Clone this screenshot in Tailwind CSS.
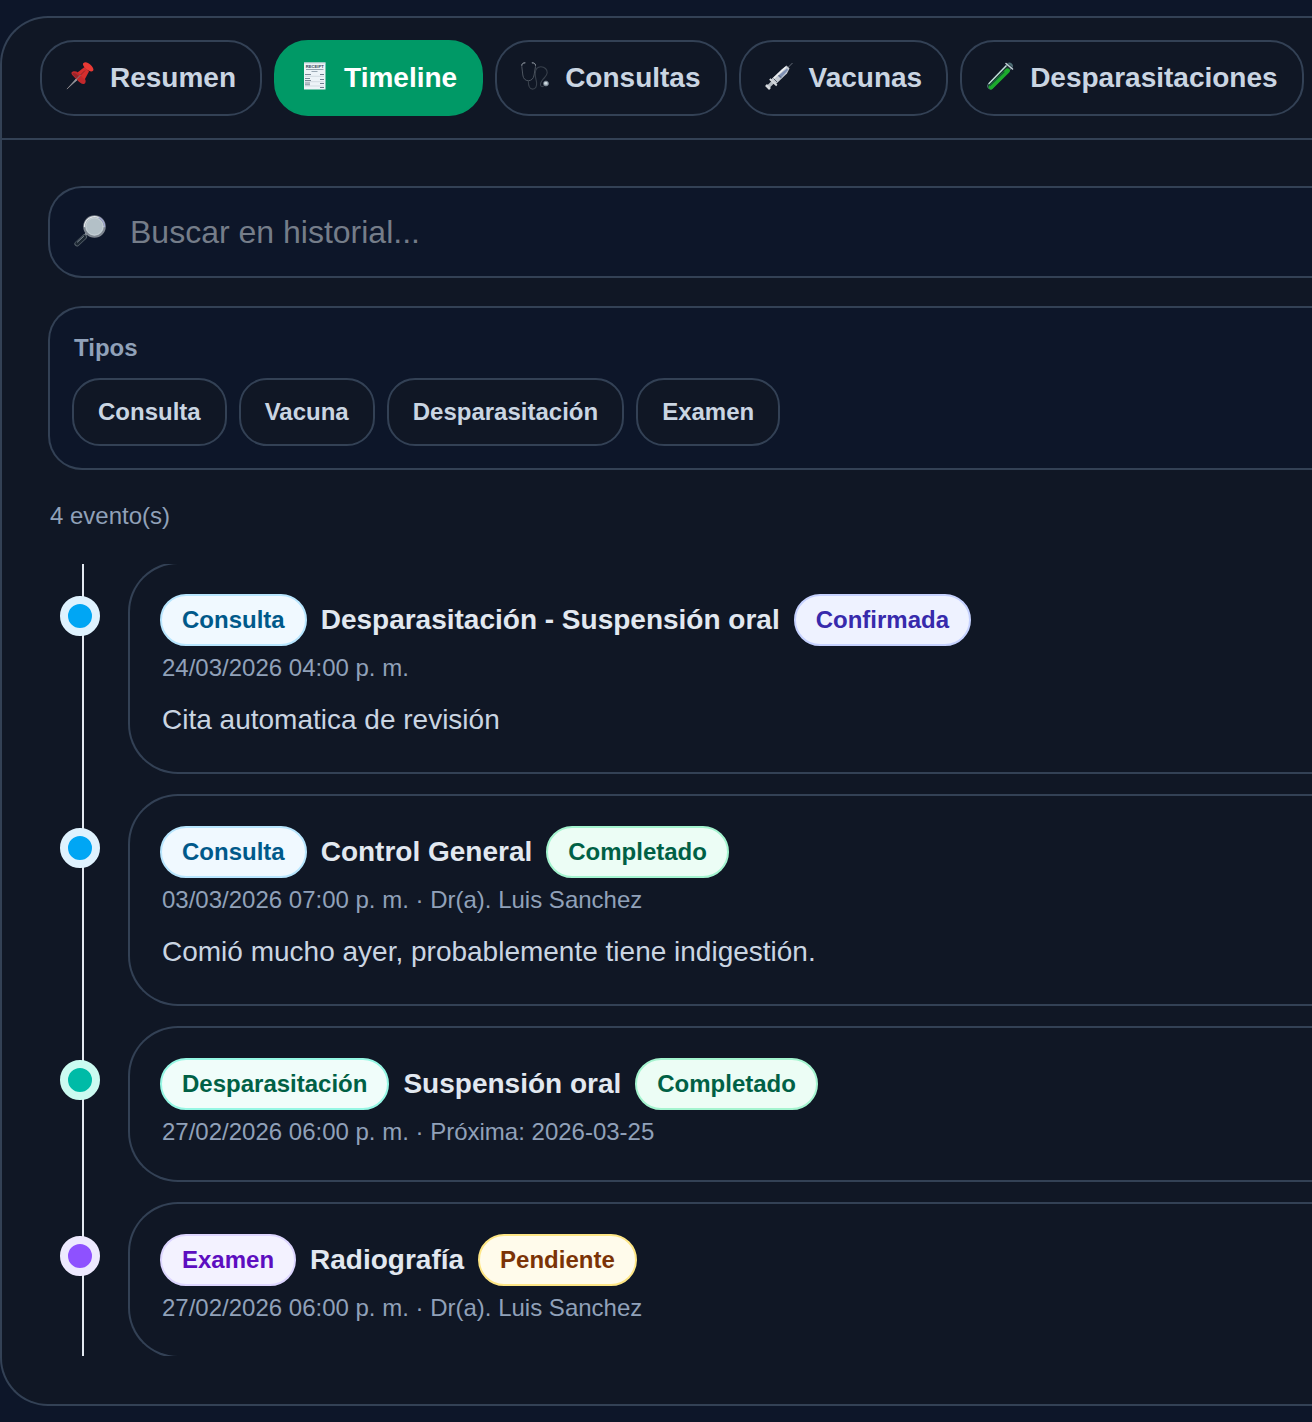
<!DOCTYPE html>
<html lang="es">
<head>
<meta charset="utf-8">
<meta name="viewport" content="width=device-width, initial-scale=1">
<title>Historial</title>
<script src="https://cdn.jsdelivr.net/npm/@tailwindcss/browser@4"></script>
</head>
<body class="min-h-screen overflow-x-hidden bg-[#0d1629] py-4 font-['Liberation_Sans',Arial,sans-serif]">
<main class="rounded-l-[48px] border-y-2 border-l-2 border-[#334155] bg-[#101725]">

  <nav class="flex gap-3 overflow-hidden border-b-2 border-[#334155] py-[22px] pl-[38px] text-[28px] leading-10 font-bold text-slate-300" aria-label="Secciones">
    <button type="button" class="flex h-[76px] shrink-0 items-center gap-4 rounded-[34px] border-2 border-[#334155] px-6">
      <svg class="mb-1 size-7" viewBox="0 0 28 28" aria-hidden="true">
        <path d="M.3 27.700 11 15.500l1.500 1.500Z" fill="#a9b0b8"/>
        <path d="M5.500 10.500c1.500-1.700 4.500-1.500 6.500 0l7 6.500c1.200 2 .8 4.200-1 5-2 .5-4.500-1.300-7-4.200s-6.200-5.200-5.500-7.300Z" fill="#c3282c"/>
        <path d="m11.500 10.500 7-5.500 4.500 4.500-4.300 8Z" fill="#d62e2d"/>
        <path d="M17.500.9c1.800-1.500 4.700-.4 7 1.800s3.700 4.800 2.500 6.100-4.300.5-6.800-1.800-4.200-4.700-2.700-6.100Z" fill="#e93a35"/>
        <path d="M6.500 11c2.500-.5 4.500 1 6.500 3l-2 2.500c-2.200-2-4-3.600-4.500-5.500Z" fill="#96262b"/>
        <path d="m12 15.500 7-7" stroke="#8e2429" stroke-width="1"/>
        <path d="M1 27 14.500 13" stroke="#8b8388" stroke-width=".9"/>
      </svg>
      Resumen
    </button>
    <button type="button" aria-current="page" class="flex h-[76px] shrink-0 items-center gap-4 rounded-[34px] border-2 border-[#009966] bg-[#009966] px-6 text-white">
      <svg class="mb-1 size-7" viewBox="0 0 28 28" aria-hidden="true">
        <path d="M4 .5h21.500v27H4Z" fill="#edf3f8"/>
        <path d="M4 .5h21.500v1H4Z" fill="#c3ced8"/>
        <text x="14.750" y="6" text-anchor="middle" font-size="4.200" font-weight="700" fill="#33475a">RECEIPT</text>
        <path d="M6 7.500h17.500" stroke="#7b8b9b" stroke-width=".8"/>
        <path d="M11.500 9.500h6" stroke="#9aa8b4" stroke-width="1"/>
        <path d="M5 12.500h6M5 16.500h5M5 18.500h6M5 21h5M5 22.800h5" stroke="#7a8997" stroke-width="1"/>
        <path d="M20 12.500h4M20 17.500h4M20 21.500h4M20 25.500h4" stroke="#6a7c8d" stroke-width="1.200"/>
        <path d="M5 14.300h19M5 19.700h19M5 24h19" stroke="#c6d0d9" stroke-width=".7"/>
      </svg>
      Timeline
    </button>
    <button type="button" class="flex h-[76px] shrink-0 items-center gap-4 rounded-[34px] border-2 border-[#334155] px-6">
      <svg class="mb-1 size-7" viewBox="0 0 28 28" fill="none" stroke-linecap="round" aria-hidden="true">
        <path d="M3.800.8C1.500.8.5 2.200.8 4.500l1 8.500c.4 3.500 2.500 5.700 5.500 5.700s5.300-2 5.800-5.700l1.400-8.500c.3-2.400-.8-3.700-3.200-3.700" stroke="#4d5560" stroke-width="1"/>
        <path d="M4 .8C2 .8.900 1.700.8 3.200M11.200.8c2 0 3.200.8 3.300 2.300" stroke="#8a919a" stroke-width="1"/>
        <path d="M7.300 18.800c0 5.500 1.500 8.300 4.200 8.300 3.400 0 4.300-2.700 4.100-6.200-.2-3-1.600-5.500-1.400-9.400.2-4.200 2.500-6.700 5.700-6.700 3.600 0 6.500 2.500 6.300 6-.2 3.200-3 4.800-4.800 7.200-1.700 2.300-2.500 4.500-1.400 6 .8 1 2.500.6 3.500-.5" stroke="#38404c" stroke-width="1.100"/>
        <circle cx="25" cy="21.500" r="2.500" fill="#aebcc6" stroke="#66717d" stroke-width=".8"/>
        <path d="M24 21h1.500" stroke="#f2f6f8" stroke-width="1.200"/>
      </svg>
      Consultas
    </button>
    <button type="button" class="flex h-[76px] shrink-0 items-center gap-4 rounded-[34px] border-2 border-[#334155] px-6">
      <svg class="mb-1 size-7" viewBox="0 0 28 28" aria-hidden="true">
        <path d="m22 6.500 5.500-5.500" stroke="#626b76" stroke-width="1"/>
        <path d="m21.500 3.500 3 3-2.500 5L10.500 22.500l-5-4.500L16.500 7.500Z" fill="#c2c8d0"/>
        <path d="m22 6.500 1 1.500-7.500 8.500-2.500-2.500Z" fill="#7d8fb3"/>
        <path d="m8 17 13-12" stroke="#f0f2f4" stroke-width="1.400"/>
        <path d="m13.500 13 2.500 2.500M12 20l-3.500-3.500" stroke="#555e69" stroke-width="1"/>
        <path d="m3.500 24.500 4.500-4.500" stroke="#b5bbc2" stroke-width="3.400"/>
        <path d="m4.800 17 7 6.500" stroke="#d5d9dd" stroke-width="1.800"/>
        <path d="m1 23 4 4" stroke="#d5d9dd" stroke-width="2.600"/>
      </svg>
      Vacunas
    </button>
    <button type="button" class="flex h-[76px] shrink-0 items-center gap-4 rounded-[34px] border-2 border-[#334155] px-6">
      <svg class="mb-1 size-7" viewBox="0 0 28 28" stroke-linecap="round" aria-hidden="true">
        <path d="M23.500 4 4.500 24" stroke="#4f6f76" stroke-width="6.600"/>
        <path d="M22 6 4.500 24" stroke="#1c302f" stroke-width="5.200"/>
        <path d="M21.500 8.700 5 25" stroke="#1cab2c" stroke-width="4.800"/>
        <path d="M18 10 4 23.500" stroke="#14553a" stroke-width="1.200"/>
        <path d="M20 4 3 21.500" stroke="#c4e0db" stroke-width="1.300"/>
        <path d="m20 1.500 6.500 5.500" stroke="#c3ced6" stroke-width="1.600"/>
        <path d="m22 1.500 4 3.500" stroke="#303c49" stroke-width=".8"/>
      </svg>
      Desparasitaciones
    </button>
  </nav>

  <div class="py-[46px] pl-[46px] pb-12">
    <label class="flex h-[92px] items-center gap-6 rounded-l-[34px] border-y-2 border-l-2 border-[#334155] bg-[#0d1629] pl-6">
      <svg class="mb-0.5 size-8 shrink-0" viewBox="0 0 32 32" stroke-linecap="round" aria-hidden="true">
        <path d="m11 20 2.500-2.500" stroke="#a9b1b7" stroke-width="2"/>
        <path d="m3 28.800 7.500-7" stroke="#56616b" stroke-width="5.200"/>
        <path d="m3.200 28.500 7-6.500" stroke="#1d2833" stroke-width="3.800"/>
        <path d="m3.500 27 6-5.700" stroke="#8e9aa4" stroke-width="1"/>
        <circle cx="20.500" cy="11.500" r="10.300" fill="#afbdc5" stroke="#7d858f" stroke-width="2"/>
        <path d="M10.500 11.500a10 10 0 0 1 14-9" stroke="#e5e9ec" stroke-width="1.300" fill="none"/>
        <path d="M25 2.700a10 10 0 0 1 5.500 9" stroke="#a5abd2" stroke-width="1.300" fill="none"/>
        <circle cx="20.500" cy="11.500" r="8.500" fill="#b3c0c7" stroke="#c9d2d7" stroke-width=".8"/>
      </svg>
      <input type="text" placeholder="Buscar en historial..." aria-label="Buscar en historial" class="min-w-0 flex-1 bg-transparent text-[32px] leading-10 text-slate-200 outline-none placeholder:text-[#757d89]">
    </label>

    <section class="mt-7 rounded-l-[34px] border-y-2 border-l-2 border-[#334155] bg-[#0d1629] pt-6 pb-[22px] pl-[22px] text-2xl font-bold">
      <h2 class="pl-0.5 text-slate-400">Tipos</h2>
      <div class="mt-3.5 flex flex-wrap gap-3 text-slate-300">
        <button type="button" class="h-[68px] rounded-[28px] border-2 border-[#334155] bg-[#101725] px-6">Consulta</button>
        <button type="button" class="h-[68px] rounded-[28px] border-2 border-[#334155] bg-[#101725] px-6">Vacuna</button>
        <button type="button" class="h-[68px] rounded-[28px] border-2 border-[#334155] bg-[#101725] px-6">Desparasitación</button>
        <button type="button" class="h-[68px] rounded-[28px] border-2 border-[#334155] bg-[#101725] px-6">Examen</button>
      </div>
    </section>

    <p class="mt-[30px] pl-0.5 text-2xl text-slate-400">4 evento(s)</p>

    <div class="relative mt-8 overflow-hidden">
      <div class="absolute inset-y-0 left-[34px] w-0.5 bg-slate-200"></div>
      <ol class="relative -my-0.5 flex flex-col gap-5 pl-3">
        <li class="flex items-start">
          <span class="mt-[34px] mr-7 size-10 shrink-0 rounded-full border-8 border-sky-100 bg-sky-500"></span>
          <article class="min-w-0 flex-1 rounded-l-[50px] border-y-2 border-l-2 border-[#334155] pt-[30px] pb-8 pl-[30px]">
            <div class="flex flex-wrap items-center gap-3.5">
              <span class="rounded-full border-2 border-sky-200 bg-sky-50 px-5 py-2 text-2xl font-bold text-sky-800">Consulta</span>
              <h3 class="text-[28px] leading-10 font-bold text-slate-200">Desparasitación - Suspensión oral</h3>
              <span class="rounded-full border-2 border-indigo-200 bg-indigo-50 px-5 py-2 text-2xl font-bold text-indigo-800">Confirmada</span>
            </div>
            <p class="mt-1.5 pl-0.5 text-2xl text-slate-400">24/03/2026 04:00 p. m.</p>
            <p class="mt-4 pl-0.5 text-[28px] leading-10 text-slate-300">Cita automatica de revisión</p>
          </article>
        </li>
        <li class="flex items-start">
          <span class="mt-[34px] mr-7 size-10 shrink-0 rounded-full border-8 border-sky-100 bg-sky-500"></span>
          <article class="min-w-0 flex-1 rounded-l-[50px] border-y-2 border-l-2 border-[#334155] pt-[30px] pb-8 pl-[30px]">
            <div class="flex flex-wrap items-center gap-3.5">
              <span class="rounded-full border-2 border-sky-200 bg-sky-50 px-5 py-2 text-2xl font-bold text-sky-800">Consulta</span>
              <h3 class="text-[28px] leading-10 font-bold text-slate-200">Control General</h3>
              <span class="rounded-full border-2 border-emerald-200 bg-emerald-50 px-5 py-2 text-2xl font-bold text-emerald-800">Completado</span>
            </div>
            <p class="mt-1.5 pl-0.5 text-2xl text-slate-400">03/03/2026 07:00 p. m. · Dr(a). Luis Sanchez</p>
            <p class="mt-4 pl-0.5 text-[28px] leading-10 text-slate-300">Comió mucho ayer, probablemente tiene indigestión.</p>
          </article>
        </li>
        <li class="flex items-start">
          <span class="mt-[34px] mr-7 size-10 shrink-0 rounded-full border-8 border-teal-100 bg-teal-500"></span>
          <article class="min-w-0 flex-1 rounded-l-[50px] border-y-2 border-l-2 border-[#334155] pt-[30px] pb-8 pl-[30px]">
            <div class="flex flex-wrap items-center gap-3.5">
              <span class="rounded-full border-2 border-teal-200 bg-teal-50 px-5 py-2 text-2xl font-bold text-emerald-800">Desparasitación</span>
              <h3 class="text-[28px] leading-10 font-bold text-slate-200">Suspensión oral</h3>
              <span class="rounded-full border-2 border-emerald-200 bg-emerald-50 px-5 py-2 text-2xl font-bold text-emerald-800">Completado</span>
            </div>
            <p class="mt-1.5 pl-0.5 text-2xl text-slate-400">27/02/2026 06:00 p. m. · Próxima: 2026-03-25</p>
          </article>
        </li>
        <li class="flex items-start">
          <span class="mt-[34px] mr-7 size-10 shrink-0 rounded-full border-8 border-violet-100 bg-violet-500"></span>
          <article class="min-w-0 flex-1 rounded-l-[50px] border-y-2 border-l-2 border-[#334155] pt-[30px] pb-8 pl-[30px]">
            <div class="flex flex-wrap items-center gap-3.5">
              <span class="rounded-full border-2 border-violet-200 bg-[#f3f2ff] px-5 py-2 text-2xl font-bold text-violet-800">Examen</span>
              <h3 class="text-[28px] leading-10 font-bold text-slate-200">Radiografía</h3>
              <span class="rounded-full border-2 border-amber-200 bg-amber-50 px-5 py-2 text-2xl font-bold text-amber-900">Pendiente</span>
            </div>
            <p class="mt-1.5 pl-0.5 text-2xl text-slate-400">27/02/2026 06:00 p. m. · Dr(a). Luis Sanchez</p>
          </article>
        </li>
      </ol>
    </div>
  </div>
</main>
</body>
</html>
